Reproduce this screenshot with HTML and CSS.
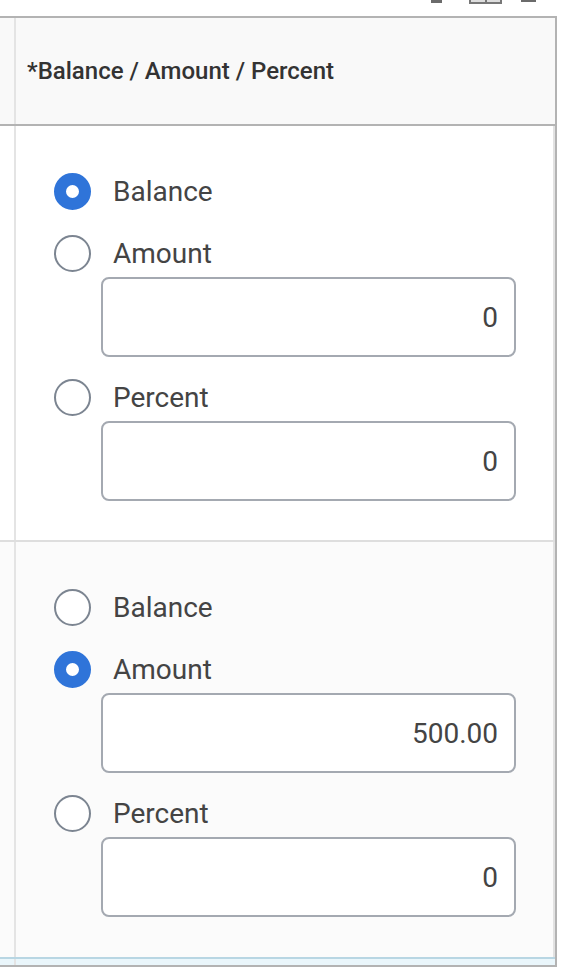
FILE: index.html
```html
<!DOCTYPE html>
<html>
<head>
<meta charset="utf-8">
<link rel="stylesheet" href="styles.css">
</head>
<body>
<div class="toolbar">
  <span class="tool tool-a"></span>
  <span class="tool tool-b"><i></i></span>
  <span class="tool tool-c"></span>
</div>
<div class="grid">
  <div class="line head">
    <div class="gutter"></div>
    <div class="hcell">*Balance / Amount / Percent</div>
  </div>
  <div class="line row">
    <div class="gutter"></div>
    <div class="cell">
      <div class="opt"><span class="radio on"></span><span class="lbl">Balance</span></div>
      <div class="opt"><span class="radio"></span><span class="lbl">Amount</span></div>
      <div class="field"><span class="val">0</span></div>
      <div class="opt"><span class="radio"></span><span class="lbl">Percent</span></div>
      <div class="field"><span class="val">0</span></div>
    </div>
  </div>
  <div class="line row alt">
    <div class="gutter"></div>
    <div class="cell">
      <div class="opt"><span class="radio"></span><span class="lbl">Balance</span></div>
      <div class="opt"><span class="radio on"></span><span class="lbl">Amount</span></div>
      <div class="field"><span class="val">500.00</span></div>
      <div class="opt"><span class="radio"></span><span class="lbl">Percent</span></div>
      <div class="field"><span class="val">0</span></div>
    </div>
  </div>
  <div class="line foot">
    <div class="gutter"></div>
    <div class="fcell"></div>
  </div>
</div>
</body>
</html>
```
FILE: styles.css
```css
* { box-sizing: border-box; }
html, body { margin: 0; padding: 0; background: #fff; }
body { font-family: Roboto, "Liberation Sans", Arial, sans-serif; color: #444; width: 570px; }

.toolbar { height: 16px; display: flex; align-items: flex-start; }
.tool { display: block; }
.tool-a { width: 11px; height: 3px; background: #6b6b6b; margin-left: 431px; }
.tool-b { width: 33px; height: 4px; border: 2px solid #777; border-top: none; margin-left: 27px; background: #ddd; position: relative; }
.tool-b i { position: absolute; left: 14px; top: 0; width: 2px; height: 2px; background: #777; }
.tool-c { width: 15px; height: 2px; background: #6b6b6b; margin-left: 19px; }

.grid { width: 557px; border-top: 2px solid #b3b3b3; border-right: 2px solid #b3b3b3; }
.line { display: flex; }
.gutter { width: 16px; flex: none; border-right: 2px solid #e4e4e4; }

.head { height: 108px; background: #f9f9f9; border-bottom: 2px solid #b3b3b3; }
.hcell { flex: 1; display: flex; align-items: center; padding-left: 11px; padding-bottom: 1px; font-size: 24px; font-weight: 500; color: #333; }

.row { height: 416px; background: #fff; border-bottom: 2px solid #dedede; }
.row.alt { height: 415px; background: #fbfbfb; border-bottom: none; }
.cell { flex: 1; padding: 47px 0 0 38px; border-right: 2px solid #e2e2e2; }

.opt { display: flex; align-items: center; height: 36px; margin-bottom: 26px; }
.opt + .field { margin-top: -20px; }
.radio { width: 37px; height: 37px; border-radius: 50%; border: 2px solid #7c8591; background: #fff; flex: none; }
.radio.on { border: 12px solid #2f74d9; }
.lbl { margin-left: 22px; font-size: 28px; color: #444; }

.field { margin-left: 47px; width: 415px; height: 80px; border: 2px solid #a4a9b1; border-radius: 8px; background: #fff; display: flex; align-items: center; justify-content: flex-end; padding-right: 16px; margin-bottom: 22px; }
.val { font-size: 28px; color: #444; }

.foot { height: 10px; background: #eaf6fb; border-top: 2px solid #b8d6e3; border-bottom: 2px solid #b3b3b3; }
.fcell { flex: 1; }
```
